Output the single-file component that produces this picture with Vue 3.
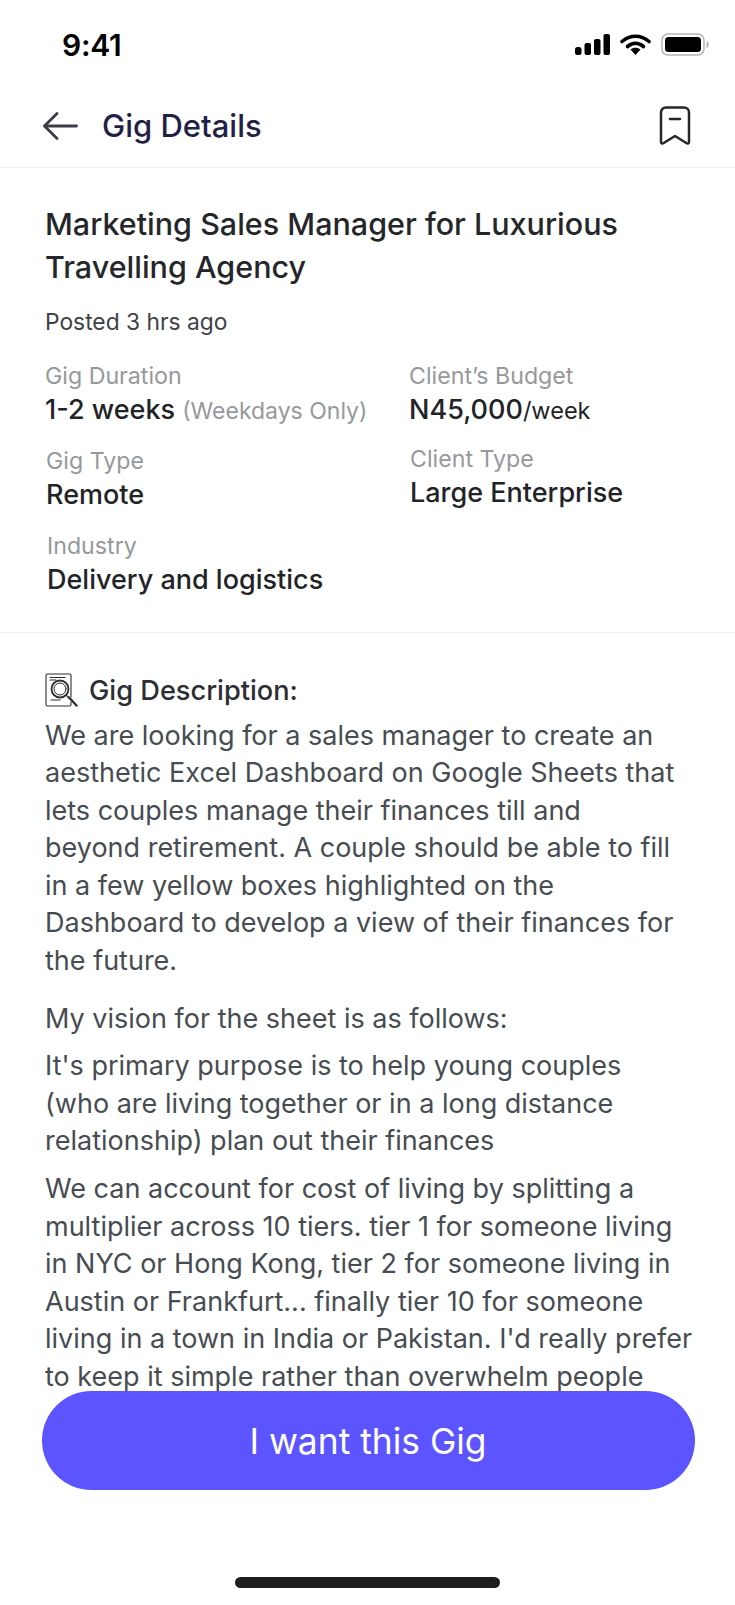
<script setup>
const leftFacts = [
  { label: 'Gig Type', value: 'Remote' },
  { label: 'Industry', value: 'Delivery and logistics' },
]
const paragraphs = [
  [
    'We are looking for a sales manager to create an',
    'aesthetic Excel Dashboard on Google Sheets that',
    'lets couples manage their finances till and',
    'beyond retirement. A couple should be able to fill',
    'in a few yellow boxes highlighted on the',
    'Dashboard to develop a view of their finances for',
    'the future.',
  ],
  ['My vision for the sheet is as follows:'],
  [
    "It's primary purpose is to help young couples",
    '(who are living together or in a long distance',
    'relationship) plan out their finances',
  ],
  [
    'We can account for cost of living by splitting a',
    'multiplier across 10 tiers. tier 1 for someone living',
    'in NYC or Hong Kong, tier 2 for someone living in',
    'Austin or Frankfurt... finally tier 10 for someone',
    "living in a town in India or Pakistan. I'd really prefer",
    'to keep it simple rather than overwhelm people',
  ],
]
</script>

<template>
  <div class="page">
    <div class="status">
      <span class="time">9:41</span>
      <div class="status-icons">
        <svg width="35" height="21" viewBox="0 0 35 21"><rect x="0" y="13" width="6.5" height="8" rx="2.5"/><rect x="9.5" y="9" width="6.5" height="12" rx="2"/><rect x="19" y="5" width="6.5" height="16" rx="2"/><rect x="28.5" y="0" width="6.5" height="21" rx="2"/></svg>
        <svg width="31" height="21" viewBox="0 0 31 21"><path d="M2 7.5C10 .5 21 .5 29 7.5" fill="none" stroke="#000" stroke-width="3.6" stroke-linecap="round"/><path d="M7.5 12.5C12.5 8.3 18.5 8.3 23.5 12.5" fill="none" stroke="#000" stroke-width="3.6" stroke-linecap="round"/><path d="M10.5 15.5 15.5 21 20.5 15.5C17.5 13.3 13.5 13.3 10.5 15.5Z"/></svg>
        <svg width="48" height="23" viewBox="0 0 48 23"><rect x="1" y="1" width="42" height="21" rx="6" fill="none" stroke="#b5b5b5" stroke-width="1.5"/><rect x="4" y="4" width="36" height="15" rx="3.5"/><path d="M45.5 8v7c1.5-.6 2.3-2 2.3-3.5S47 8.6 45.5 8Z" fill="#b5b5b5"/></svg>
      </div>
    </div>

    <header class="header">
      <svg class="back" width="35" height="28" viewBox="0 0 35 28" fill="none" stroke="#3a3d45" stroke-width="2.8" stroke-linecap="round" stroke-linejoin="round"><path d="M14 1.5 1.5 14 14 26.5"/><path d="M2 14h31.5"/></svg>
      <h1 class="header-title">Gig Details</h1>
      <svg class="bookmark" width="32" height="40" viewBox="0 0 32 40" fill="none" stroke="#26272b" stroke-width="2.5" stroke-linecap="round" stroke-linejoin="round"><path d="M7 1.5h18a5 5 0 0 1 5 5V36a1.5 1.5 0 0 1-2.3 1.3L16 30 4.3 37.3A1.5 1.5 0 0 1 2 36V6.5a5 5 0 0 1 5-5Z"/><path d="M11 13h10"/></svg>
    </header>

    <section class="summary">
      <h2 class="title">Marketing Sales Manager for Luxurious Travelling Agency</h2>
      <p class="posted">Posted 3 hrs ago</p>
      <div class="facts">
        <div class="col col-left">
          <div class="fact">
            <span class="label">Gig Duration</span>
            <span class="value">1-2 weeks <span class="muted">(Weekdays Only)</span></span>
          </div>
          <div v-for="d in leftFacts" :key="d.label" class="fact">
            <span class="label">{{ d.label }}</span>
            <span class="value">{{ d.value }}</span>
          </div>
        </div>
        <div class="col col-right">
          <div class="fact">
            <span class="label">Client’s Budget</span>
            <span class="value">N45,000<span class="unit">/week</span></span>
          </div>
          <div class="fact">
            <span class="label">Client Type</span>
            <span class="value">Large Enterprise</span>
          </div>
        </div>
      </div>
    </section>

    <section class="desc">
      <div class="desc-head">
        <svg width="34" height="34" viewBox="0 0 34 34" fill="none" stroke="#2c2e33" stroke-width="1.1" stroke-linecap="round"><path d="M26 24V2.5A1.5 1.5 0 0 0 24.5 1H2.5A1.5 1.5 0 0 0 1 2.5v29A1.5 1.5 0 0 0 2.5 33h22a1.5 1.5 0 0 0 1.5-1.5V29"/><path d="M5 4.5h15M5 7h6M6 27h9"/><circle cx="15" cy="16" r="8.5" stroke-width="1.8"/><circle cx="15" cy="16" r="6" stroke-width="1"/><path d="m21.5 22.5 2.5 2.5"/><path d="m24 24.5 7.5 8" stroke-width="2.4"/></svg>
        <h3 class="desc-title">Gig Description:</h3>
      </div>
      <p v-for="(lines, i) in paragraphs" :key="i" class="para">
        <span v-for="line in lines" :key="line" class="line">{{ line }}</span>
      </p>
    </section>

    <div class="footer">
      <button class="cta">I want this Gig</button>
      <div class="home"></div>
    </div>
  </div>
</template>

<style>
html, body { margin: 0; background: #fff; }
</style>

<style scoped>
.page {
  position: relative;
  width: 735px;
  height: 1605px;
  overflow: hidden;
  background: #fff;
  font-family: Inter, "Noto Sans", sans-serif;
  display: flex;
  flex-direction: column;
}
.status {
  height: 90px;
  flex: none;
  box-sizing: border-box;
  padding: 33px 26px 0 62px;
  display: flex;
  justify-content: space-between;
  align-items: flex-start;
}
.time { font-size: 30px; line-height: 24px; font-weight: 600; color: #000; letter-spacing: -0.3px; }
.status-icons { display: flex; align-items: center; gap: 10px; }
.header {
  height: 78px;
  flex: none;
  box-sizing: border-box;
  border-bottom: 1px solid #efefef;
  padding: 0 44px 6px 43px;
  display: flex;
  align-items: center;
}
.back { margin-right: 24px; }
.header-title { margin: 0; flex: 1; font-size: 31px; font-weight: 500; color: #231f46; }
.summary {
  flex: none;
  height: 465px;
  box-sizing: border-box;
  border-bottom: 1px solid #efefef;
  padding: 34px 45px 0;
}
.title { margin: 0; font-size: 30.5px; line-height: 43px; font-weight: 500; color: #25262a; }
.posted { margin: 20px 0 0; font-size: 22.8px; line-height: 28px; color: #3e4147; }
.facts { display: flex; margin-top: 25px; }
.col-left { width: 364px; display: flex; flex-direction: column; gap: 17px; }
.col-right { display: flex; flex-direction: column; gap: 14px; }
.fact { display: flex; flex-direction: column; }
.col-left .fact:nth-child(1) { margin-bottom: -1px; }
.col-left .fact:nth-child(2) { margin-left: 1px; }
.col-left .fact:nth-child(3) { margin-left: 2px; }
.col-right .fact:nth-child(2) { margin-left: 1px; }
.label { font-size: 23.2px; line-height: 30px; color: #96989c; }
.value { font-size: 27px; line-height: 38px; font-weight: 500; color: #222327; white-space: nowrap; }
.muted { font-size: 23px; font-weight: 400; color: #96989c; }
.unit { font-size: 23.5px; font-weight: 400; }
.desc {
  flex: none;
  height: 758px;
  box-sizing: border-box;
  padding: 34px 45px 0;
}
.desc-head { display: flex; align-items: center; gap: 10px; height: 46px; margin-bottom: 3.5px; }
.desc-title { margin: 0; font-size: 27.2px; font-weight: 500; color: #2c2e33; }
.para { margin: 0 0 10px; font-size: 27px; line-height: 37.6px; color: #474c52; }
.para:first-of-type { margin-bottom: 20px; }
.line { display: block; white-space: nowrap; }
.footer { position: relative; flex: 1; display: flex; flex-direction: column; align-items: center; }
.cta {
  width: 653px;
  height: 99px;
  margin-left: 1px;
  padding-top: 2px;
  border: 0;
  border-radius: 50px;
  background: #5b54ff;
  color: #fff;
  font-family: inherit;
  font-size: 35.4px;
  font-weight: 400;
}
.home { width: 265px; height: 11px; margin-top: 87px; border-radius: 6px; background: #1e1e1e; }
</style>
